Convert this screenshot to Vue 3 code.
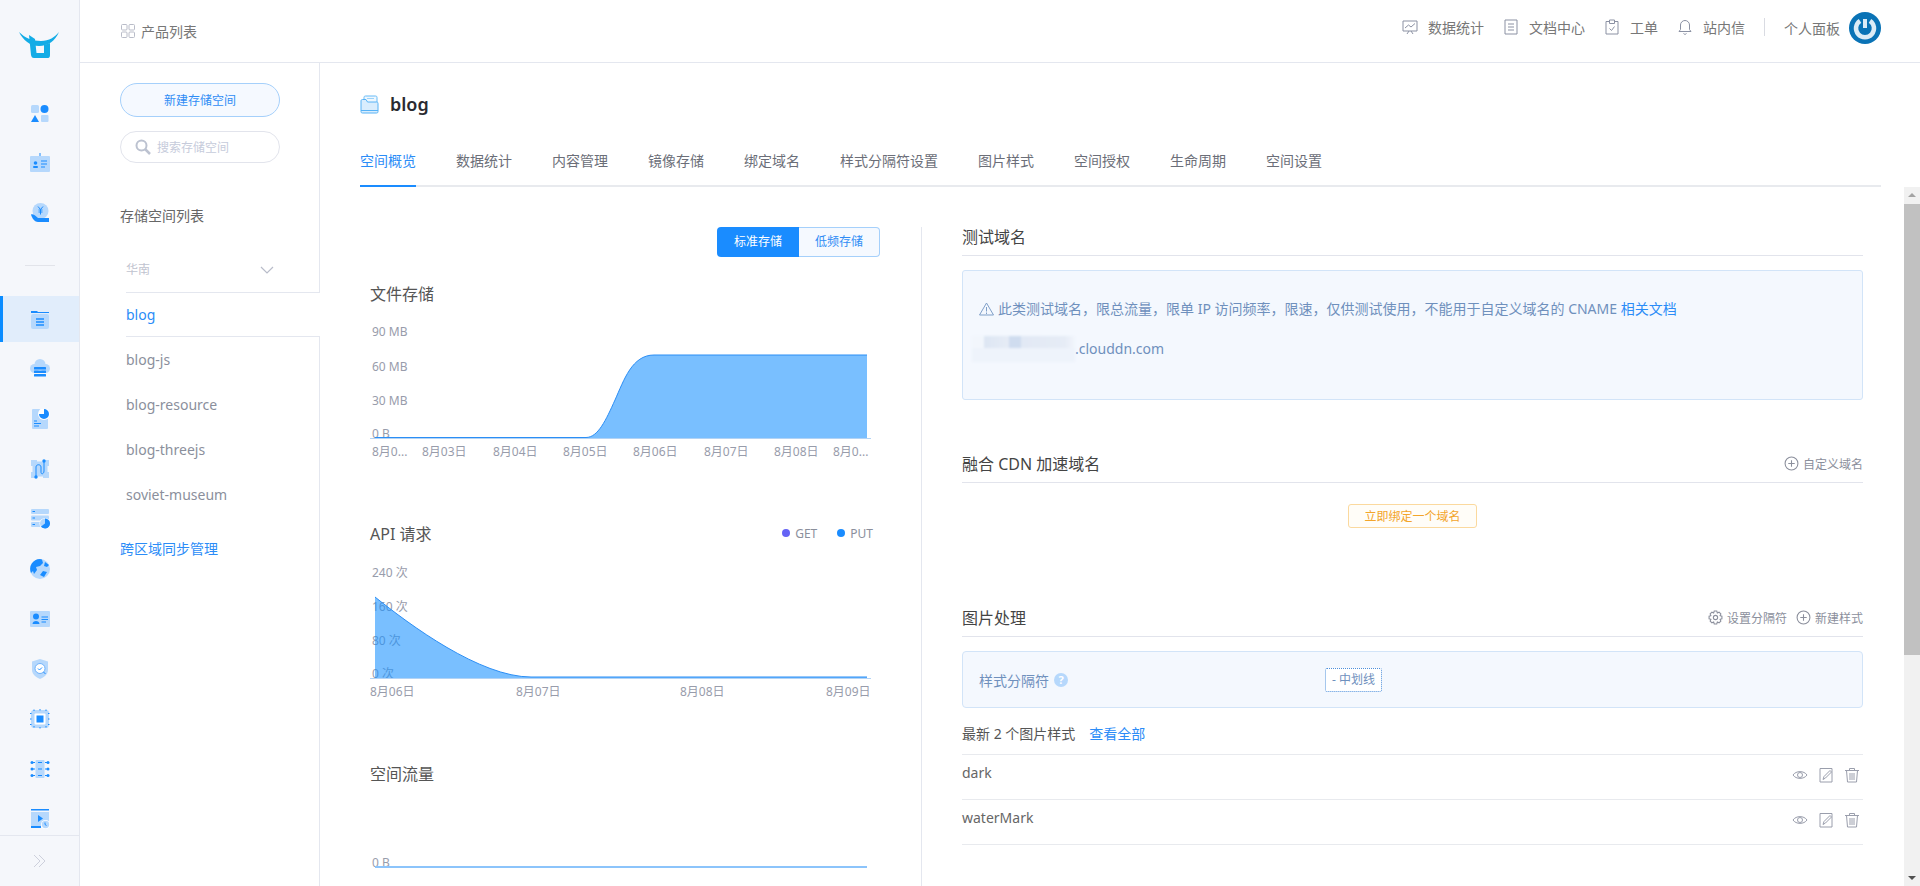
<template>
  <div class="app">
    <!-- left icon rail -->
    <aside class="rail">
      <div class="rail-logo">
        <svg width="40" height="27" viewBox="0 0 40 27">
          <path class="logo" d="M0 0C6 6 13 9 22 9C30 9 36 5 40 0C36 9 29 14 20 14C11 14 4 8 0 0Z" />
          <path class="logo" d="M10 3L16 7L17.500 21H25V13L31 11V23C31 25.500 30 26 28 26H15C13 26 12.500 25 12 23Z" />
        </svg>
      </div>
      <div class="rail-items">
        <div class="rail-item">
          <svg width="20" height="20" viewBox="0 0 20 20"><rect class="lt" x="1" y="2" width="8" height="8" rx="1.5" /><circle class="dk" cx="14.5" cy="6" r="4" /><path class="dk" d="M5 12L9 19H1Z" /><rect class="lt" x="11" y="12" width="7.5" height="7" rx="1" /></svg>
        </div>
        <div class="rail-item">
          <svg width="20" height="20" viewBox="0 0 20 20"><rect class="lt" x="0" y="3" width="20" height="16" rx="1" /><rect class="dk" x="9.5" y="0" width="1" height="3" /><circle class="dk" cx="5.5" cy="10" r="1.8" /><rect class="dk" x="3" y="13" width="5" height="2" rx="1" /><path class="ln" d="M11 8H17M11 11H17M11 14H15" /></svg>
        </div>
        <div class="rail-item">
          <svg width="20" height="20" viewBox="0 0 20 20"><circle class="lt" cx="10.5" cy="8" r="8" /><path class="ln" d="M8 3.500L10.500 6.500L13 3.500M10.500 6.500V11.500M8.500 7H12.500M8.500 9H12.500" /><path class="dk" d="M1 11.500C3 10.500 5 12.500 8 15H19V19H8C5 19 2 15.500 1 11.500Z" /></svg>
        </div>
        <div class="rail-sep"></div>
        <div class="rail-item active">
          <svg width="20" height="20" viewBox="0 0 20 20"><path class="dk" d="M1 2H7L8 3H19V4H1Z" /><rect class="lt" x="1" y="5" width="18" height="15" rx="2" /><path class="ln wide" d="M6 10H14M6 13H14M6 16H14" /></svg>
        </div>
        <div class="rail-item">
          <svg width="20" height="20" viewBox="0 0 20 20"><circle class="lt" cx="10" cy="5.500" r="5.500" /><circle class="lt" cx="4.500" cy="9.500" r="4.500" /><circle class="lt" cx="15.500" cy="9.500" r="4.500" /><rect class="dk" x="4" y="8" width="12" height="2.500" rx=".5" /><rect class="dk" x="4" y="11.500" width="12" height="2.500" rx=".5" /><rect class="dk" x="4" y="15" width="12" height="2.500" rx=".5" /></svg>
        </div>
        <div class="rail-item">
          <svg width="20" height="20" viewBox="0 0 20 20"><rect class="lt" x="2" y="0" width="16" height="20" rx="1" /><circle cx="14" cy="5" r="6" fill="#fff" /><path class="dk" d="M14 5V0A5 5 0 1 1 9 5Z" /><path class="ln" d="M4 12H7M4 14.500H11M4 17H9" /></svg>
        </div>
        <div class="rail-item">
          <svg width="20" height="20" viewBox="0 0 20 20"><path class="lt" d="M1 1H7V2.500H13V1H19V7H17.500V13H19V19H13V17.500H7V19H1V13H2.500V7H1Z" /><path class="ln" d="M6 18V8C6 5 11 5 11 8V13C11 16 14 15 14 12V2" fill="none" /><circle class="dk" cx="6" cy="18" r="1.700" /><circle class="dk" cx="14" cy="2" r="1.700" /></svg>
        </div>
        <div class="rail-item">
          <svg width="20" height="20" viewBox="0 0 20 20"><rect class="lt" x="1" y="0" width="18" height="5" rx="1" /><rect class="lt" x="1" y="6.500" width="18" height="5" rx="1" /><rect class="lt" x="1" y="13" width="18" height="5" rx="1" /><path class="ln" d="M2.500 2.500H5M2.500 9H5M2.500 15.500H5" /><circle cx="15" cy="14.500" r="5.500" fill="#fff" /><circle class="lt" cx="15" cy="14.500" r="5" /><path class="dk" d="M15 14.500V9.500A5 5 0 1 1 11 17.500Z" /></svg>
        </div>
        <div class="rail-item">
          <svg width="20" height="20" viewBox="0 0 20 20"><circle class="lt" cx="10" cy="10" r="10" /><path class="dk" d="M10 0A10 10 0 0 0 1 14L3 12L4 15L7 11L6 8L10 7L13 4L12 0.500ZM13 12L17 13L14 18L10 16ZM15 3L19 6L17 8L14 7Z" /></svg>
        </div>
        <div class="rail-item">
          <svg width="20" height="20" viewBox="0 0 20 20"><rect class="lt" x="0" y="2" width="20" height="16" rx="1" /><circle class="dk" cx="6" cy="7.500" r="3" /><path class="dk" d="M2.500 15C2.500 11 9.500 11 9.500 15Z" /><path class="ln" d="M11.500 8H18M11.500 10.500H18M11.500 13H16" /></svg>
        </div>
        <div class="rail-item">
          <svg width="20" height="20" viewBox="0 0 20 20"><path class="lt" d="M10 0L18 2.500V11C18 15 14 18.500 10 20C6 18.500 2 15 2 11V2.500Z" /><circle cx="10" cy="9.500" r="5" fill="#fff" stroke="#6fb2fb" stroke-width="1" /><path class="ln" d="M8 9.500L9.500 11L12 8.500M13.500 13L15.500 15" /></svg>
        </div>
        <div class="rail-item">
          <svg width="20" height="20" viewBox="0 0 20 20"><rect class="lt" x="1" y="1" width="18" height="18" rx="3" /><rect x="4.500" y="4.500" width="11" height="11" rx="1" fill="#fff" /><rect class="dk" x="6.500" y="6.500" width="7" height="7" /><path class="ln" stroke-dasharray="1.500 6" d="M4 0.500V3M10 0V2M16 0.500V3M4 17V19.500M10 18V20M16 17V19.500M0 4.500H2M0 10H2M0 15.500H2M18 4.500H20M18 10H20M18 15.500H20" /></svg>
        </div>
        <div class="rail-item">
          <svg width="20" height="20" viewBox="0 0 20 20"><rect class="lt" x="5.500" y="1" width="9" height="18" rx="1" /><path class="ln" d="M8 3.500H12M8 10H12M8 16.500H12M2 3.500H5M15 3.500H18M2 10H5M15 10H18M2 16.500H5M15 16.500H18" /><circle class="dk" cx="2" cy="3.500" r="1.500" /><circle class="dk" cx="18" cy="3.500" r="1.500" /><circle class="dk" cx="2" cy="10" r="1.500" /><circle class="dk" cx="18" cy="10" r="1.500" /><circle class="dk" cx="2" cy="16.500" r="1.500" /><circle class="dk" cx="18" cy="16.500" r="1.500" /></svg>
        </div>
        <div class="rail-item">
          <svg width="20" height="20" viewBox="0 0 20 20"><rect class="dk" x="1" y="0" width="18" height="1.500" /><rect class="lt" x="1" y="3" width="18" height="14" /><path class="dk" d="M8 6L13 9.500L8 13Z" /><rect class="dk" x="1" y="17" width="10" height="2" /><circle cx="15.500" cy="15.500" r="4.500" fill="#fff" /><circle class="lt" cx="15.500" cy="15.500" r="3.700" /><path class="ln" d="M15 13.500V15.500L16.500 16.500" /></svg>
        </div>
      </div>
      <div class="rail-foot">
        <svg width="14" height="14" viewBox="0 0 14 14"><path d="M1 1L7 7L1 13M6 1L12 7L6 13" fill="none" stroke="#cdd0dc" stroke-width="1" /></svg>
      </div>
    </aside>

    <div class="page">
      <header class="topbar">
        <div class="top-left">
          <svg width="14" height="14" viewBox="0 0 14 14" class="grid-ico"><rect x=".5" y=".5" width="5.500" height="5.500" rx="1" /><rect x="8" y=".5" width="5.500" height="5.500" rx="1" /><rect x=".5" y="8" width="5.500" height="5.500" rx="1" /><rect x="8" y="8" width="5.500" height="5.500" rx="1" /></svg>
          <span>产品列表</span>
        </div>
        <nav class="top-nav">
          <a class="nav-item">
            <svg width="16" height="16" viewBox="0 0 16 16"><path d="M1 2H15V12H1ZM3 9L6.500 6L9 8L13 4.500M5 15L7 12M11 15L9 12" /></svg>
            <span>数据统计</span>
          </a>
          <a class="nav-item">
            <svg width="16" height="16" viewBox="0 0 16 16"><path d="M2 1H14V15H2ZM5 5H11M5 8H11M5 11H11" /></svg>
            <span>文档中心</span>
          </a>
          <a class="nav-item">
            <svg width="16" height="16" viewBox="0 0 16 16"><path d="M5 2.500H2V15H14V2.500H11M5.500 1H10.500V4.500H5.500ZM5.500 9.500L7.500 11.500L10.500 7.500" /></svg>
            <span>工单</span>
          </a>
          <a class="nav-item">
            <svg width="16" height="16" viewBox="0 0 16 16"><path d="M2 12.500H14L12.500 10.500V6A4.500 4.500 0 0 0 3.500 6V10.500ZM6.500 14.500C7 15.500 9 15.500 9.500 14.500M8 1V1.500" /></svg>
            <span>站内信</span>
          </a>
          <i class="nav-sep"></i>
          <a class="nav-user">
            <span>个人面板</span>
            <svg width="32" height="32" viewBox="0 0 32 32">
              <circle cx="16" cy="16" r="16" fill="#0a73b6" />
              <path d="M11 8.800A9 9 0 1 0 21 8.800" fill="none" stroke="#dcecf6" stroke-width="4.500" />
              <path d="M16 7V16" stroke="#dcecf6" stroke-width="4" />
            </svg>
          </a>
        </nav>
      </header>

      <div class="body">
        <!-- bucket list column -->
        <section class="side">
          <button class="new-btn">新建存储空间</button>
          <div class="search">
            <svg width="16" height="16" viewBox="0 0 16 16"><circle cx="6.500" cy="6.500" r="5" fill="none" stroke="#bcc2d0" stroke-width="2" /><path d="M10 10L15 15" stroke="#bcc2d0" stroke-width="2.500" /></svg>
            <span>搜索存储空间</span>
          </div>
          <div class="side-title">存储空间列表</div>
          <div class="region">
            <span>华南</span>
            <svg width="14" height="8" viewBox="0 0 14 8"><path d="M1 1L7 7L13 1" fill="none" stroke="#b8bcc9" stroke-width="1.200" /></svg>
          </div>
          <ul class="buckets">
            <li v-for="b in buckets" :key="b" :class="{ on: b === 'blog' }">{{ b }}</li>
          </ul>
          <a class="cross">跨区域同步管理</a>
        </section>

        <main class="main">
          <div class="title-row">
            <svg width="19" height="19" viewBox="0 0 19 19"><path d="M4 6V2.500C4 1.500 4.500 1 5.500 1H15.500C16.500 1 17 1.500 17 2.500V7" fill="#eef7fe" stroke="#66bbf7" /><path d="M7 3.500H14" stroke="#9ad3fa" /><path d="M1 8V6C1 5 1.500 4.500 2.500 4.500H6L7.500 7H16.500C17.500 7 18 7.500 18 8.500V16.500C18 17.500 17.500 18 16.500 18H2.500C1.500 18 1 17.500 1 16.500Z" fill="#d9edfd" stroke="#56b2f6" /><path d="M1 15.500H18" stroke="#56b2f6" /></svg>
            <h1>blog</h1>
          </div>
          <div class="tabs">
            <a v-for="(t, i) in tabs" :key="t" class="tab" :class="{ on: i === 0 }">{{ t }}</a>
          </div>

          <div class="scroller">
            <div class="content">
              <!-- left: charts -->
              <div class="charts">
                <div class="switch">
                  <span class="sw on">标准存储</span>
                  <span class="sw">低频存储</span>
                </div>

                <div class="chart-head first"><span>文件存储</span></div>
                <svg class="chart" width="510" height="160" viewBox="0 0 510 160">
                  <text x="2" y="31">90 MB</text>
                  <text x="2" y="66">60 MB</text>
                  <text x="2" y="100">30 MB</text>
                  <text x="2" y="133">0 B</text>
                  <path class="area" d="M216 132.500C228 132.500 236 115 245 95S262 50 284 50H497V133H216Z" />
                  <path class="curve" d="M5 132.500H216C228 132.500 236 115 245 95S262 50 284 50H497" />
                  <path class="axis" d="M0 133.500H501" />
                  <text v-for="l in storageTicks" :key="l.x" :x="l.x" y="151">{{ l.t }}</text>
                </svg>

                <div class="chart-head">
                  <span>API 请求</span>
                  <div class="legend">
                    <i class="dot get"></i><em>GET</em>
                    <i class="dot put"></i><em>PUT</em>
                  </div>
                </div>
                <svg class="chart" width="510" height="160" viewBox="0 0 510 160">
                  <text x="2" y="32">240 次</text>
                  <text x="2" y="66">160 次</text>
                  <text x="2" y="100">80 次</text>
                  <text x="2" y="133">0 次</text>
                  <path class="area" d="M5 52C40 80 110 132 161 132H497V133H5Z" />
                  <path class="curve" d="M5 52C40 80 110 132 161 132H497" />
                  <path class="axis" d="M0 133.500H501" />
                  <text v-for="l in apiTicks" :key="l.x" :x="l.x" y="151">{{ l.t }}</text>
                </svg>

                <div class="chart-head"><span>空间流量</span></div>
                <svg class="chart" width="510" height="100" viewBox="0 0 510 100">
                  <text x="2" y="82">0 B</text>
                  <path d="M5 82H497" stroke="#8cc4fb" stroke-width="2" />
                </svg>
              </div>

              <!-- right: domains and image styles -->
              <div class="info">
                <div class="sec-head"><h3>测试域名</h3></div>
                <div class="notice">
                  <p class="warn">
                    <svg width="15" height="14" viewBox="0 0 15 14"><path d="M7.500 1L14.500 13H.5ZM7.500 5V9.500M7.500 10.500V12" fill="none" stroke="#7f9fc8" /></svg>
                    <span>此类测试域名，限总流量，限单 IP 访问频率，限速，仅供测试使用，不能用于自定义域名的 CNAME <a>相关文档</a></span>
                  </p>
                  <p class="domain"><i class="blur"></i><span>.clouddn.com</span></p>
                </div>

                <div class="sec-head cdn">
                  <h3>融合 CDN 加速域名</h3>
                  <div class="sec-acts">
                    <a><svg width="15" height="15" viewBox="0 0 14 14"><circle cx="7" cy="7" r="6" /><path d="M7 4V10M4 7H10" /></svg>自定义域名</a>
                  </div>
                </div>
                <div class="bind-row"><button class="bind">立即绑定一个域名</button></div>

                <div class="sec-head img">
                  <h3>图片处理</h3>
                  <div class="sec-acts">
                    <a><svg width="15" height="15" viewBox="0 0 14 14"><path d="M5.800 1H8.200L8.700 2.700L10.300 2L12 3.700L11.300 5.300L13 5.800V8.200L11.300 8.700L12 10.300L10.300 12L8.700 11.300L8.200 13H5.800L5.300 11.300L3.700 12L2 10.300L2.700 8.700L1 8.200V5.800L2.700 5.300L2 3.700L3.700 2L5.300 2.700Z" /><circle cx="7" cy="7" r="2" /></svg>设置分隔符</a>
                    <a><svg width="15" height="15" viewBox="0 0 14 14"><circle cx="7" cy="7" r="6" /><path d="M7 4V10M4 7H10" /></svg>新建样式</a>
                  </div>
                </div>
                <div class="sep-box">
                  <div class="sep-label">样式分隔符 <i class="help">?</i></div>
                  <span class="sep-tag">- 中划线</span>
                </div>
                <div class="latest">最新 2 个图片样式<a>查看全部</a></div>
                <div class="style-rows">
                  <div v-for="s in styles" :key="s" class="style-row">
                    <span>{{ s }}</span>
                    <div class="row-acts">
                      <svg width="16" height="16" viewBox="0 0 16 16"><path d="M1 8C4 3.500 12 3.500 15 8C12 12.500 4 12.500 1 8Z" /><circle cx="8" cy="8" r="2.500" /></svg>
                      <svg width="16" height="16" viewBox="0 0 16 16"><path d="M2 1.500H14V15H2ZM5 12.500L6 9.500L12 3.500L13.500 5L7.500 11Z" /></svg>
                      <svg width="16" height="16" viewBox="0 0 16 16"><path d="M1 3.500H15M5.500 3.500V1.500H10.500V3.500M2.500 3.500L3.500 15H12.500L13.500 3.500M6 6V13M8 6V13M10 6V13" /></svg>
                    </div>
                  </div>
                </div>
              </div>
            </div>
            <div class="scrollbar">
              <span class="arr up"></span>
              <span class="thumb"></span>
              <span class="arr down"></span>
            </div>
          </div>
        </main>
      </div>
    </div>
  </div>
</template>

<script setup>
const buckets = ['blog', 'blog-js', 'blog-resource', 'blog-threejs', 'soviet-museum']
const tabs = ['空间概览', '数据统计', '内容管理', '镜像存储', '绑定域名', '样式分隔符设置', '图片样式', '空间授权', '生命周期', '空间设置']
const styles = ['dark', 'waterMark']

const storageTicks = [
  { x: 2, t: '8月0...' },
  { x: 52, t: '8月03日' },
  { x: 123, t: '8月04日' },
  { x: 193, t: '8月05日' },
  { x: 263, t: '8月06日' },
  { x: 334, t: '8月07日' },
  { x: 404, t: '8月08日' },
  { x: 463, t: '8月0...' },
]
const apiTicks = [
  { x: 0, t: '8月06日' },
  { x: 146, t: '8月07日' },
  { x: 310, t: '8月08日' },
  { x: 456, t: '8月09日' },
]
</script>

<style scoped>
.app {
  display: flex;
  width: 1920px;
  height: 886px;
  overflow: hidden;
  background: #fff;
  font-family: "Noto Sans", "Noto Sans CJK SC", sans-serif;
  font-size: 14px;
  color: #666;
}

/* rail */
.rail {
  width: 80px;
  flex: none;
  display: flex;
  flex-direction: column;
  box-sizing: border-box;
  background: #f5f7fb;
  border-right: 1px solid #e4e7ef;
}
.rail-logo {
  height: 90px;
  box-sizing: border-box;
  padding: 32px 0 0 19px;
}
.logo { fill: #13ace6; }
.rail-items { flex: 1; min-height: 0; overflow: hidden; }
.rail-item {
  height: 46px;
  margin-bottom: 4px;
  display: flex;
  align-items: center;
  justify-content: center;
}
.rail-item.active {
  background: #e1edfb;
  box-shadow: inset 3px 0 0 #0a8cff;
}
.rail-sep {
  width: 30px;
  height: 1px;
  margin: 29px auto 30px;
  background: #e2e4ea;
}
.lt { fill: #b6d8fc; }
.dk { fill: #1a8cff; }
.ln { fill: none; stroke: #1a8cff; stroke-width: 1; }
.ln.wide { stroke-width: 1.5; }
.rail-foot {
  height: 51px;
  flex: none;
  box-sizing: border-box;
  border-top: 1px solid #e4e7ef;
  display: flex;
  align-items: center;
  justify-content: center;
}

.page { flex: 1; min-width: 0; display: flex; flex-direction: column; }

/* top bar */
.topbar {
  height: 63px;
  flex: none;
  box-sizing: border-box;
  border-bottom: 1px solid #e4e7ef;
  display: flex;
  align-items: center;
  justify-content: space-between;
  padding: 0 39px 0 41px;
}
.top-left { display: flex; align-items: center; gap: 6px; color: #777; }
.grid-ico rect { fill: none; stroke: #b9bcc8; }
.top-nav { display: flex; align-items: center; gap: 19px; margin-bottom: 8px; color: #777; }
.nav-item { display: flex; align-items: center; gap: 10px; }
.nav-item svg { fill: none; stroke: #8b91a3; stroke-width: 1; }
.nav-sep { width: 1px; height: 18px; background: #d9dbe2; }
.nav-user { display: flex; align-items: center; gap: 9px; margin-top: 2px; }

/* bucket list */
.body { flex: 1; min-height: 0; display: flex; }
.side {
  width: 240px;
  flex: none;
  box-sizing: border-box;
  border-right: 1px solid #e4e7ef;
  padding: 20px 0 0 40px;
}
.new-btn {
  display: block;
  width: 160px;
  height: 34px;
  padding: 0;
  border: 1px solid #a5d0fb;
  border-radius: 17px;
  background: #f5f9ff;
  color: #2f8cf5;
  font: inherit;
  font-size: 12px;
}
.search {
  width: 160px;
  height: 32px;
  margin-top: 14px;
  box-sizing: border-box;
  border: 1px solid #e2e4ec;
  border-radius: 16px;
  display: flex;
  align-items: center;
  gap: 6px;
  padding-left: 14px;
  font-size: 12px;
  color: #c6cbdb;
}
.side-title { margin-top: 43px; line-height: 20px; color: #666; }
.region {
  margin: 34px 0 0 6px;
  height: 32px;
  padding-right: 45px;
  display: flex;
  align-items: flex-start;
  justify-content: space-between;
  font-size: 12px;
  line-height: 20px;
  color: #bfc3cf;
}
.region svg { margin-top: 6px; }
.buckets { list-style: none; margin: 0 0 0 6px; padding: 0; }
.buckets li {
  height: 45px;
  box-sizing: border-box;
  line-height: 45px;
  color: #8b8f9c;
}
.buckets li.on {
  position: relative;
  margin-right: -1px;
  line-height: 43px;
  color: #2b8cf7;
  background: #fff;
  border-top: 1px solid #e4e7ef;
  border-bottom: 1px solid #e4e7ef;
}
.cross { display: block; margin-top: 22px; line-height: 20px; color: #2b8cf7; }

/* main */
.main { flex: 1; min-width: 0; display: flex; flex-direction: column; }
.title-row {
  display: flex;
  align-items: center;
  gap: 11px;
  height: 24px;
  margin: 29px 0 0 40px;
  flex: none;
}
.title-row h1 { margin: 0; font-size: 18px; font-weight: 600; color: #2a2a30; }
.tabs {
  flex: none;
  display: flex;
  gap: 40px;
  height: 47px;
  box-sizing: border-box;
  margin: 24px 39px 0 40px;
  border-bottom: 2px solid #e8eaee;
}
.tab {
  height: 47px;
  box-sizing: border-box;
  line-height: 42px;
  border-bottom: 2px solid transparent;
  color: #6b6e78;
}
.tab.on { color: #2b8cf7; border-bottom-color: #1a8cff; }

.scroller { flex: 1; min-height: 0; display: flex; }
.content { flex: 1; min-width: 0; display: flex; padding-left: 40px; overflow: hidden; }
.scrollbar {
  width: 16px;
  flex: none;
  background: #f1f1f1;
  display: flex;
  flex-direction: column;
  align-items: center;
}
.thumb { width: 100%; height: 451px; background: #c1c1c1; }
.arr { width: 0; height: 0; border-left: 4px solid transparent; border-right: 4px solid transparent; }
.arr.up { margin: 6px 0 7px; border-bottom: 4px solid #a3a3a3; }
.arr.down { margin-top: auto; margin-bottom: 6px; border-top: 4px solid #505050; }

/* charts */
.charts {
  width: 562px;
  flex: none;
  box-sizing: border-box;
  margin-top: 40px;
  padding: 0 41px 0 10px;
  border-right: 1px solid #e4e7ef;
}
.switch { display: flex; justify-content: flex-end; height: 30px; font-size: 12px; }
.sw {
  width: 81px;
  box-sizing: border-box;
  text-align: center;
  line-height: 28px;
  border: 1px solid #a5d0fb;
  border-left: 0;
  border-radius: 0 4px 4px 0;
  background: #f5f9ff;
  color: #2f8cf5;
}
.sw.on {
  width: 82px;
  line-height: 30px;
  border: 0;
  border-radius: 4px 0 0 4px;
  background: #1a8cff;
  color: #fff;
}
.chart-head {
  display: flex;
  justify-content: space-between;
  align-items: center;
  height: 24px;
  margin-top: 56px;
  padding-right: 7px;
  font-size: 16px;
  color: #555;
}
.chart-head.first { margin-top: 24px; }
.legend { display: flex; align-items: center; font-size: 12px; color: #8b8f9c; }
.legend em { font-style: normal; margin-right: 20px; }
.legend em:last-child { margin-right: 0; }
.dot { width: 8px; height: 8px; border-radius: 50%; margin-right: 5px; }
.dot.get { background: #6563f5; }
.dot.put { background: #1a8cff; }
.chart { display: block; }
.chart text { font-size: 12px; fill: #989cab; }
.area { fill: #1890ff; fill-opacity: .58; }
.curve { fill: none; stroke: #2b8ef5; stroke-width: 1; }
.axis { stroke: #b3d3f5; stroke-width: 1; }

/* right column */
.info { flex: 1; min-width: 0; padding: 38px 41px 0 40px; box-sizing: border-box; }
.sec-head {
  display: flex;
  justify-content: space-between;
  align-items: center;
  height: 31px;
  padding-bottom: 7px;
  box-sizing: border-box;
  border-bottom: 1px solid #e2e4ec;
}
.sec-head h3 { margin: 0; font-size: 16px; font-weight: 400; line-height: 24px; color: #444; }
.sec-head.cdn { margin-top: 52px; }
.sec-head.img { margin-top: 78px; }
.sec-acts { display: flex; gap: 9px; font-size: 12px; color: #8b8f9c; }
.sec-acts a { display: flex; align-items: center; gap: 4px; }
.sec-acts svg { fill: none; stroke: #8b8f9c; stroke-width: 1; }
.notice {
  margin-top: 14px;
  height: 130px;
  box-sizing: border-box;
  padding: 28px 16px 0;
  border: 1px solid #d2e4f8;
  border-radius: 3px;
  background: #f4f8fe;
  color: #6f90bd;
}
.warn { display: flex; align-items: center; gap: 4px; margin: 0; line-height: 20px; }
.warn a { color: #2b8cf7; }
.domain { display: flex; align-items: center; margin: 17px 0 0 -7px; line-height: 20px; }
.blur {
  width: 103px;
  height: 26px;
  background:
    linear-gradient(90deg, #f2f6fc 12%, #dde6f3 12%, #e6ecf6 36%, #cfdcef 36%, #cfdcef 48%, #e2e9f5 48%, #e6ecf6 90%, #f2f6fc 100%) top / 100% 12px no-repeat,
    #eef3fb;
  filter: blur(1px);
}
.bind-row { display: flex; justify-content: center; margin-top: 21px; }
.bind {
  width: 129px;
  height: 24px;
  padding: 0;
  border: 1px solid #fbd99e;
  border-radius: 3px;
  background: #fffdf8;
  color: #f3a52b;
  font: inherit;
  font-size: 12px;
}
.sep-box {
  margin-top: 14px;
  height: 57px;
  box-sizing: border-box;
  padding-left: 16px;
  display: flex;
  align-items: center;
  border: 1px solid #d2e4f8;
  border-radius: 4px;
  background: #f4f8fe;
}
.sep-label {
  width: 346px;
  display: flex;
  align-items: center;
  gap: 5px;
  color: #6f90bd;
}
.help {
  width: 14px;
  height: 14px;
  border-radius: 50%;
  background: #b6d8fc;
  color: #fff;
  font-size: 11px;
  font-style: normal;
  font-weight: 700;
  line-height: 14px;
  text-align: center;
}
.sep-tag {
  width: 57px;
  height: 24px;
  box-sizing: border-box;
  border: 1px dotted #4d8fdc;
  border-radius: 2px;
  background: #fff;
  font-size: 12px;
  line-height: 22px;
  text-align: center;
  color: #6f90bd;
}
.latest { margin-top: 16px; line-height: 20px; color: #555; }
.latest a { margin-left: 14px; color: #2b8cf7; }
.style-rows { margin-top: 10px; border-top: 1px solid #e8eaee; }
.style-row {
  height: 45px;
  box-sizing: border-box;
  border-bottom: 1px solid #e8eaee;
  display: flex;
  justify-content: space-between;
  padding: 8px 3px 0 0;
  line-height: 20px;
  color: #666;
}
.row-acts { display: flex; gap: 10px; padding-top: 4px; height: 16px; }
.row-acts svg { fill: none; stroke: #9a9eac; stroke-width: 1; }
</style>

<style>
html, body { margin: 0; overflow: hidden; }
a { text-decoration: none; }
</style>
